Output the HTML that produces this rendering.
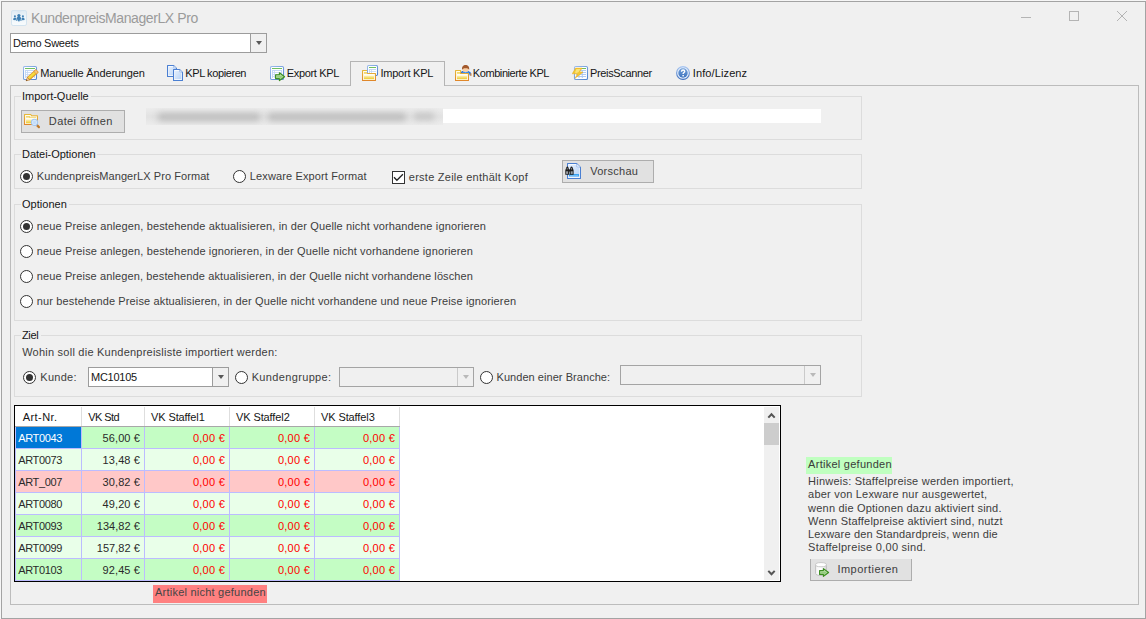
<!DOCTYPE html>
<html><head><meta charset="utf-8"><title>KundenpreisManagerLX Pro</title>
<style>
html,body{margin:0;padding:0;}
body{width:1146px;height:619px;overflow:hidden;background:#f0f0f0;position:relative;font-family:"Liberation Sans",sans-serif;font-size:11px;}
.a{position:absolute;box-sizing:border-box;}
.t{position:absolute;white-space:pre;font-family:"Liberation Sans",sans-serif;}
.win{left:1px;top:1px;width:1145px;height:618px;border:1px solid #a3a3a3;background:#f0f0f0;}
.edge{left:0;top:0;width:1146px;height:619px;background:#f6f6f6;}
.combo{background:#fff;border:1px solid #9c9c9c;}
.combo.dis{background:#f0f0f0;border-color:#a4a4a4;}
.combo .sep{position:absolute;top:0;bottom:0;right:0;border-left:1px solid #9c9c9c;background:#f0f0f0;}
.combo.dis .sep{border-left-color:#cacaca;}
.arrow{position:absolute;width:0;height:0;border-left:3.5px solid transparent;border-right:3.5px solid transparent;border-top:4px solid #585858;}
.dis .arrow{border-top-color:#b9b9b9;}
.panel{left:10px;top:85px;width:1129px;height:520px;border:1px solid #bcbcbc;}
.tabsel{left:350px;top:61px;width:95px;height:25px;border:1px solid #b4b4b4;border-bottom:none;background:#f0f0f0;}
.grp{border:1px solid #dcdcdc;}
.gl{background:#f0f0f0;height:3px;}
.btn{background:#e1e1e1;border:1px solid #adadad;}
.radio{width:13px;height:13px;border:1px solid #333;border-radius:50%;background:#fff;}
.radio.on::after{content:"";position:absolute;left:2px;top:2px;width:7px;height:7px;border-radius:50%;background:#333;}
.chk{width:13px;height:13px;border:1px solid #333;background:#fff;}
.grid{left:14px;top:405px;width:767px;height:177px;border:1px solid #000;background:#fff;overflow:hidden;}
.cell{position:absolute;box-sizing:border-box;}
.sb{position:absolute;left:749px;top:1px;width:15px;height:173px;background:#f0f0f0;}
.thumb{position:absolute;left:0;top:16px;width:15px;height:22px;background:#cdcdcd;}

</style></head>
<body>
<svg width="0" height="0" style="position:absolute"><defs>
<linearGradient id="gFold" x1="0" y1="0" x2="0" y2="1"><stop offset="0" stop-color="#fdf3c0"/><stop offset="1" stop-color="#edc92b"/></linearGradient>
<linearGradient id="gFoldB" x1="0" y1="0" x2="0" y2="1"><stop offset="0" stop-color="#e6b83a"/><stop offset="1" stop-color="#e0872a"/></linearGradient>
<linearGradient id="gDoc" x1="0" y1="0" x2="1" y2="1"><stop offset="0" stop-color="#e4effd"/><stop offset="1" stop-color="#b9d4f7"/></linearGradient>
<linearGradient id="gTabB" x1="0" y1="0" x2="1" y2="1"><stop offset="0" stop-color="#9dbdec"/><stop offset="1" stop-color="#4f83cf"/></linearGradient>
<linearGradient id="gInfo" x1="0" y1="0" x2="0" y2="1"><stop offset="0" stop-color="#a9c6f1"/><stop offset="1" stop-color="#3d6fbd"/></linearGradient>
<linearGradient id="gInfo2" x1="0" y1="0" x2="0" y2="1"><stop offset="0" stop-color="#6f9ed8"/><stop offset="1" stop-color="#3f74bf"/></linearGradient>
<linearGradient id="gArr" x1="0" y1="0" x2="0" y2="1"><stop offset="0" stop-color="#b7dfa6"/><stop offset="1" stop-color="#6db550"/></linearGradient>
<linearGradient id="gPen" x1="0" y1="0" x2="0" y2="1"><stop offset="0" stop-color="#e79a25"/><stop offset="0.3" stop-color="#f7e24a"/><stop offset="0.7" stop-color="#f2d22e"/><stop offset="1" stop-color="#d98a1e"/></linearGradient>
<linearGradient id="gCyl" x1="0" y1="0" x2="1" y2="0"><stop offset="0" stop-color="#f4f4f4"/><stop offset="0.5" stop-color="#ffffff"/><stop offset="1" stop-color="#d8d8d8"/></linearGradient>
<linearGradient id="gTitle" x1="0" y1="0" x2="0" y2="1"><stop offset="0" stop-color="#dfebf4"/><stop offset="0.45" stop-color="#eef5fa"/><stop offset="1" stop-color="#f8fbfd"/></linearGradient>
</defs></svg>
<div class="a edge"></div>
<div class="a win"></div>
<svg class="a" style="left:11px;top:10px;" width="16" height="16" viewBox="0 0 16 16"><rect x="0.5" y="0.5" width="15" height="15" rx="1.6" fill="url(#gTitle)" stroke="#d3e3ef" stroke-width="1"/><path d="M5 0.8L8 3.6L11 0.8" fill="#dbe8f2" stroke="none" opacity="0.9"/><g fill="#3f80b5"><circle cx="7.9" cy="5.6" r="1.6"/><path d="M5.3 11.1C5.2 8 6.3 6.6 7.9 6.6C9.5 6.6 10.6 8 10.5 11.1L9.5 10.9L9.3 9L8.4 11.6H7.4L6.5 9L6.3 10.9Z"/><circle cx="3.9" cy="6.3" r="1.05"/><path d="M2.2 10C2.2 8 3 7.4 3.9 7.4C4.6 7.4 5 7.7 5.2 8.2L4.6 10.2Z"/><circle cx="11.9" cy="6.3" r="1.05"/><path d="M13.6 10C13.6 8 12.8 7.4 11.9 7.4C11.2 7.4 10.8 7.7 10.6 8.2L11.2 10.2Z"/></g></svg>
<svg class="a" style="left:1015px;top:5px" width="120" height="24" viewBox="0 0 120 24"><g stroke="#b4b4b4" stroke-width="1" fill="none"><path d="M6 12.5H16"/><rect x="54.5" y="6.5" width="9" height="9"/><path d="M102 6L112 16M112 6L102 16"/></g></svg>
<div class="a combo" style="left:10px;top:33px;width:257px;height:20px"><div class="sep" style="left:239px"><div class="arrow" style="left:4.5px;top:7px"></div></div></div>
<div class="a panel"></div>
<div class="a tabsel"></div>
<svg class="a" style="left:23px;top:65px;" width="18" height="17" viewBox="0 0 18 17"><g transform="translate(0,1)"><rect x="0.5" y="0.5" width="13" height="13" rx="1.3" fill="#fff" stroke="url(#gTabB)" stroke-width="1.1"/><rect x="2" y="2" width="10" height="1" fill="#6fbf62"/><rect x="2" y="4" width="10" height="8" fill="#c3d7f5"/><rect x="3" y="5" width="1.2" height="1.2" fill="#fff"/><rect x="5" y="5" width="6" height="1.2" fill="#fff"/><rect x="3" y="7" width="1.2" height="1.2" fill="#fff"/><rect x="5" y="7" width="6" height="1.2" fill="#fff"/><rect x="3" y="9" width="1.2" height="1.2" fill="#fff"/><rect x="5" y="9" width="6" height="1.2" fill="#fff"/><rect x="3" y="11" width="1.2" height="1" fill="#fff"/><rect x="5" y="11" width="6" height="1" fill="#fff"/></g><g transform="translate(4.3,14.7) rotate(-42)"><rect x="1.6" y="-1.9" width="11.6" height="3.8" rx="0.8" fill="url(#gPen)" stroke="#d8891f" stroke-width="0.5"/><rect x="10.4" y="-1.9" width="2.8" height="3.8" rx="0.9" fill="#f6c27a" stroke="#d8891f" stroke-width="0.5"/><path d="M1.7 -1.9L-1.6 0L1.7 1.9Z" fill="#f0c792" stroke="#b86f1a" stroke-width="0.5"/><path d="M-0.4 -0.7L-1.7 0L-0.4 0.7Z" fill="#4a2a08"/></g></svg>
<svg class="a" style="left:167px;top:65px;" width="17" height="17" viewBox="0 0 17 17"><g transform="translate(0,0)"><path d="M0.55 0.55H6.7L9.45 3.3V11.45H0.55Z" fill="#fff" stroke="#4a7fd2" stroke-width="1.1" stroke-linejoin="round"/><path d="M1.7 1.7H6.4V3.6H8.3V10.3H1.7Z" fill="url(#gDoc)"/><path d="M6.7 0.8V3.1H9.2" fill="#eaf2fd" stroke="#7ea6e4" stroke-width="0.6"/></g><g transform="translate(6,4)"><path d="M0.55 0.55H6.7L9.45 3.3V11.45H0.55Z" fill="#fff" stroke="#4a7fd2" stroke-width="1.1" stroke-linejoin="round"/><path d="M1.7 1.7H6.4V3.6H8.3V10.3H1.7Z" fill="url(#gDoc)"/><path d="M6.7 0.8V3.1H9.2" fill="#eaf2fd" stroke="#7ea6e4" stroke-width="0.6"/></g></svg>
<svg class="a" style="left:270px;top:65px;" width="17" height="17" viewBox="0 0 17 17"><g transform="translate(0,1)"><rect x="0.5" y="0.5" width="13" height="13" rx="1.3" fill="#fff" stroke="url(#gTabB)" stroke-width="1.1"/><rect x="2" y="2" width="10" height="1" fill="#6fbf62"/><rect x="2" y="4" width="10" height="8" fill="#c3d7f5"/><rect x="3" y="5" width="1.2" height="1.2" fill="#fff"/><rect x="5" y="5" width="6" height="1.2" fill="#fff"/><rect x="3" y="7" width="1.2" height="1.2" fill="#fff"/><rect x="5" y="7" width="6" height="1.2" fill="#fff"/><rect x="3" y="9" width="1.2" height="1.2" fill="#fff"/><rect x="5" y="9" width="6" height="1.2" fill="#fff"/><rect x="3" y="11" width="1.2" height="1" fill="#fff"/><rect x="5" y="11" width="6" height="1" fill="#fff"/></g><g transform="translate(5,7.2)"><path d="M0.6 2.6H4.4V0.6L9.6 4.5L4.4 8.4V6.4H0.6Z" fill="url(#gArr)" stroke="#3a8d1f" stroke-width="1.1" stroke-linejoin="round"/><path d="M1.6 3.6H5.2V2.6L7.8 4.5L5.2 6.4V5.4H1.6Z" fill="none" stroke="#cfeac4" stroke-width="0.5" opacity="0.8"/></g></svg>
<svg class="a" style="left:362px;top:65px;" width="17" height="17" viewBox="0 0 17 17"><g transform="translate(0,5)"><path d="M0.55 0.55H5.6V3.5H13.45V10.45H0.55Z" fill="#fffdf0" stroke="url(#gFoldB)" stroke-width="1.1" stroke-linejoin="round"/><rect x="2" y="2" width="3" height="1.8" fill="#f3d76a"/><rect x="2" y="4.6" width="10" height="1" fill="#ffffff"/><rect x="2" y="5.6" width="10" height="3.6" fill="url(#gFold)"/></g><clipPath id="cpImp"><rect x="5" y="0" width="12" height="8"/></clipPath><g clip-path="url(#cpImp)"><g transform="translate(5,0)"><rect x="0.5" y="0.5" width="10" height="10" rx="1.2" fill="#fff" stroke="url(#gTabB)" stroke-width="1.1"/><rect x="2" y="2" width="7" height="1" fill="#6fbf62"/><rect x="2" y="4" width="7" height="5.5" fill="#c3d7f5"/><rect x="3" y="5" width="1.2" height="1.2" fill="#fff"/><rect x="5" y="5" width="4" height="1.2" fill="#fff"/><rect x="3" y="7" width="1.2" height="1.2" fill="#fff"/><rect x="5" y="7" width="4" height="1.2" fill="#fff"/></g></g><rect x="14" y="8" width="2" height="2.6" fill="#fff"/><path d="M15.5 8V9.6C15.5 10.2 15.1 10.5 14.5 10.5H13.9" fill="none" stroke="#4f83cf" stroke-width="1.1"/></svg>
<svg class="a" style="left:455px;top:65px;" width="17" height="17" viewBox="0 0 17 17"><path d="M4.6 10.5V8.6C5 6.8 6.6 6.2 8 6.2H13C15 6.2 16.2 7.2 16.2 8.8V10.6H14.8V8.8L13.8 10.6H7Z" fill="#3c8eea"/><path d="M8.6 6.2L10.6 7.5L12.6 6.2Z" fill="#9fd0fb"/><path d="M13.2 6.3L15.3 8.4V10.4" fill="none" stroke="#2c64c6" stroke-width="0.9"/><path d="M8 6.3L5.2 8.6" fill="none" stroke="#2c64c6" stroke-width="0.9"/><rect x="15.4" y="8.3" width="1.1" height="2.6" fill="#f0933a"/><ellipse cx="10.6" cy="4.6" rx="3" ry="2.5" fill="#f9d0a6"/><path d="M7.1 4.9C6.5 1.6 8.4 -0.1 10.6 -0.1C12.8 -0.1 14.7 1.6 14.1 4.9C13.8 3.8 12.8 3.3 10.6 3.3C8.4 3.3 7.4 3.8 7.1 4.9Z" fill="#a3592c"/><g transform="translate(0,5)"><path d="M0.55 0.55H5.6V3.5H13.45V10.45H0.55Z" fill="#fffdf0" stroke="url(#gFoldB)" stroke-width="1.1" stroke-linejoin="round"/><rect x="2" y="2" width="3" height="1.8" fill="#f3d76a"/><rect x="2" y="4.6" width="10" height="1" fill="#ffffff"/><rect x="2" y="5.6" width="10" height="3.6" fill="url(#gFold)"/></g></svg>
<svg class="a" style="left:572px;top:65px;" width="17" height="17" viewBox="0 0 17 17"><g transform="translate(2,1)"><rect x="0.5" y="0.5" width="13" height="13" rx="1.3" fill="#fff" stroke="url(#gTabB)" stroke-width="1.1"/><rect x="2" y="2" width="10" height="1" fill="#6fbf62"/><g stroke="#a9c5ef" stroke-width="0.9"><path d="M2 4.5H12M2 6.5H12M2 8.5H12M2 10.5H12M5 4V12M8.3 4V12"/></g></g><path d="M3.6 3.1H10.2L7.6 6.8L11 7.2L3 13.3L5.6 8.8L0.2 8.8Z" fill="#f3c832" stroke="#e8a820" stroke-width="0.5" stroke-linejoin="round"/><path d="M4.4 4H8.6L6.4 7.2L4.4 8L3 7.8Z" fill="#fbe682" opacity="0.9"/></svg>
<svg class="a" style="left:676px;top:66px;" width="15" height="15" viewBox="0 0 15 15"><circle cx="7" cy="7" r="6.4" fill="#e3edfb" stroke="url(#gInfo)" stroke-width="1.1"/><circle cx="7" cy="7" r="4.7" fill="url(#gInfo2)"/><path d="M5.5 5.7C5.5 4.5 6.2 4 7.1 4C8 4 8.7 4.5 8.7 5.4C8.7 6.5 7.1 6.7 7.1 8.1" fill="none" stroke="#fff" stroke-width="1.4"/><rect x="6.4" y="9" width="1.5" height="1.4" fill="#fff"/></svg>
<div class="a grp" style="left:14px;top:96px;width:848px;height:44px"></div>
<div class="a gl" style="left:21px;top:95px;width:70px"></div>
<div class="a grp" style="left:14px;top:154px;width:848px;height:35px"></div>
<div class="a gl" style="left:21px;top:153px;width:76px"></div>
<div class="a grp" style="left:14px;top:204px;width:848px;height:117px"></div>
<div class="a gl" style="left:21px;top:203px;width:48px"></div>
<div class="a grp" style="left:14px;top:335px;width:848px;height:62px"></div>
<div class="a gl" style="left:21px;top:334px;width:20px"></div>
<div class="a" style="left:146px;top:109px;width:675px;height:14px;background:#fff"></div>
<div class="a" style="left:146px;top:108px;width:297px;height:17px;overflow:hidden;background:linear-gradient(#ececec,#e3e3e3 45%,#e3e3e3 55%,#ececec)"><div class="a" style="left:12px;top:5px;width:102px;height:8px;background:#bdbdbd;filter:blur(3px)"></div><div class="a" style="left:122px;top:5px;width:138px;height:8px;background:#bdbdbd;filter:blur(3px)"></div><div class="a" style="left:268px;top:5px;width:20px;height:7px;background:#c4c4c4;filter:blur(3px)"></div></div>
<div class="a btn" style="left:21px;top:110px;width:104px;height:23px"></div>
<div class="a btn" style="left:562px;top:160px;width:92px;height:23px"></div>
<div class="a btn" style="left:810px;top:558px;width:102px;height:23px"></div><div class="a" style="left:810px;top:558px;width:102px;height:1px;background:#f0f0f0"></div>
<svg class="a" style="left:24px;top:114px;" width="17" height="15" viewBox="0 0 17 15"><path d="M0.55 0.55H6.8L7.6 1.8H13.45V10.45H0.55Z" fill="#fffdf0" stroke="url(#gFoldB)" stroke-width="1.1" stroke-linejoin="round"/><rect x="2" y="2" width="4" height="1.6" fill="#f3d76a"/><rect x="5" y="2.8" width="7" height="0.9" fill="#f1cf62"/><rect x="2" y="5.4" width="10" height="3.9" fill="url(#gFold)"/><path d="M12.7 10.9L14.9 13.1" stroke="#bf7a2c" stroke-width="2.2" stroke-linecap="round"/><circle cx="10.5" cy="8.4" r="3.1" fill="#d5e7fb" stroke="#a3c8f2" stroke-width="1.1"/><rect x="9.2" y="7.2" width="2.6" height="2.6" fill="#c0dbf8" opacity="0.9"/></svg>
<svg class="a" style="left:565px;top:163px;" width="17" height="17" viewBox="0 0 17 17"><g transform="translate(2,0)"><path d="M0.55 0.55H9.7L13.45 4.3V15.45H0.55Z" fill="#fff" stroke="#4a7fd2" stroke-width="1.1" stroke-linejoin="round"/><path d="M1.7 1.7H9.4V4.6H12.3V14.3H1.7Z" fill="url(#gDoc)"/><path d="M9.7 0.8V4.1H13.2" fill="#eaf2fd" stroke="#7ea6e4" stroke-width="0.6"/></g><rect x="4" y="11" width="10" height="2.4" fill="#3aa2f2"/><rect x="5" y="12" width="8" height="0.6" fill="#8fd0ff"/><g fill="#1e1e1e"><path d="M0.3 11.7V7.2L1.4 4.2C1.6 3.4 3.2 3.4 3.4 4.2L4.2 7.2V11.7Z"/><path d="M4.7 11.7V7.2L5.5 4.2C5.7 3.4 7.3 3.4 7.5 4.2L8.6 7.2V11.7Z"/><rect x="3.6" y="6.4" width="1.8" height="2.2"/></g><rect x="1.1" y="8.3" width="2" height="2.6" fill="#9aa0a6"/><rect x="5.7" y="8.3" width="2" height="2.6" fill="#9aa0a6"/><rect x="1.7" y="5" width="0.9" height="1.6" fill="#8b9096"/><rect x="6.1" y="5" width="0.9" height="1.6" fill="#8b9096"/></svg>
<svg class="a" style="left:815px;top:562px;" width="15" height="16" viewBox="0 0 15 16"><path d="M0.6 2.6V11.4C0.6 12.9 3 13.5 6 13.5C9 13.5 11.4 12.9 11.4 11.4V2.6" fill="url(#gCyl)" stroke="#c0c0c0" stroke-width="1"/><ellipse cx="6" cy="2.7" rx="5.4" ry="2.1" fill="#ffffff" stroke="#c4c4c4" stroke-width="0.9"/><g transform="translate(4,6)"><path d="M0.6 2.6H4.4V0.6L9.6 4.5L4.4 8.4V6.4H0.6Z" fill="url(#gArr)" stroke="#3a8d1f" stroke-width="1.1" stroke-linejoin="round"/><path d="M1.6 3.6H5.2V2.6L7.8 4.5L5.2 6.4V5.4H1.6Z" fill="none" stroke="#cfeac4" stroke-width="0.5" opacity="0.8"/></g></svg>
<div class="a radio on" style="left:20px;top:170px"></div>
<div class="a radio" style="left:233px;top:170px"></div>
<div class="a radio on" style="left:20px;top:220px"></div>
<div class="a radio" style="left:20px;top:245px"></div>
<div class="a radio" style="left:20px;top:270px"></div>
<div class="a radio" style="left:20px;top:295px"></div>
<div class="a radio on" style="left:23px;top:371px"></div>
<div class="a radio" style="left:235px;top:371px"></div>
<div class="a radio" style="left:480px;top:371px"></div>
<div class="a chk" style="left:392px;top:171px"><svg width="11" height="11" viewBox="0 0 11 11" style="position:absolute;left:0;top:0"><path d="M1 5.3L3.9 8.3L9.9 2.3" stroke="#222" stroke-width="1.3" fill="none"/></svg></div>
<div class="a combo" style="left:88px;top:367px;width:141px;height:20px"><div class="sep" style="left:123px"><div class="arrow" style="left:4.5px;top:7px"></div></div></div>
<div class="a combo dis" style="left:339px;top:367px;width:135px;height:20px"><div class="sep" style="left:117px"><div class="arrow" style="left:4.5px;top:7px"></div></div></div>
<div class="a combo dis" style="left:620px;top:365px;width:201px;height:20px"><div class="sep" style="left:183px"><div class="arrow" style="left:4.5px;top:7px"></div></div></div>
<div class="a grid"><div class="cell" style="left:66px;top:1px;width:1px;height:19px;background:#dedede"></div><div class="cell" style="left:129px;top:1px;width:1px;height:19px;background:#dedede"></div><div class="cell" style="left:214px;top:1px;width:1px;height:19px;background:#dedede"></div><div class="cell" style="left:299px;top:1px;width:1px;height:19px;background:#dedede"></div><div class="cell" style="left:384px;top:1px;width:1px;height:19px;background:#dedede"></div><div class="cell" style="left:0px;top:20px;width:385px;height:1px;background:#a8a8a8"></div><div class="cell" style="left:0px;top:21px;width:385px;height:21px;background:#c4fdc4"></div><div class="cell" style="left:0px;top:42px;width:385px;height:1px;background:#bcbcff"></div><div class="cell" style="left:0px;top:43px;width:385px;height:21px;background:#e9ffe9"></div><div class="cell" style="left:0px;top:64px;width:385px;height:1px;background:#bcbcff"></div><div class="cell" style="left:0px;top:65px;width:385px;height:21px;background:#ffc8c8"></div><div class="cell" style="left:0px;top:86px;width:385px;height:1px;background:#bcbcff"></div><div class="cell" style="left:0px;top:87px;width:385px;height:21px;background:#e9ffe9"></div><div class="cell" style="left:0px;top:108px;width:385px;height:1px;background:#bcbcff"></div><div class="cell" style="left:0px;top:109px;width:385px;height:21px;background:#c4fdc4"></div><div class="cell" style="left:0px;top:130px;width:385px;height:1px;background:#bcbcff"></div><div class="cell" style="left:0px;top:131px;width:385px;height:21px;background:#e9ffe9"></div><div class="cell" style="left:0px;top:152px;width:385px;height:1px;background:#bcbcff"></div><div class="cell" style="left:0px;top:153px;width:385px;height:21px;background:#c4fdc4"></div><div class="cell" style="left:0px;top:174px;width:385px;height:1px;background:#bcbcff"></div><div class="cell" style="left:1px;top:21px;width:65px;height:21px;background:#0078d7"></div><div class="cell" style="left:0px;top:21px;width:1px;height:154px;background:#bcbcff"></div><div class="cell" style="left:66px;top:21px;width:1px;height:154px;background:#bcbcff"></div><div class="cell" style="left:129px;top:21px;width:1px;height:154px;background:#bcbcff"></div><div class="cell" style="left:214px;top:21px;width:1px;height:154px;background:#bcbcff"></div><div class="cell" style="left:299px;top:21px;width:1px;height:154px;background:#bcbcff"></div><div class="cell" style="left:384px;top:21px;width:1px;height:154px;background:#bcbcff"></div><div class="sb"><div class="thumb"></div><svg style="position:absolute;left:0;top:0" width="15" height="173" viewBox="0 0 15 173"><g stroke="#555" stroke-width="2" fill="none"><path d="M4.3 10.6L7.5 7.2L10.7 10.6"/><path d="M4.3 163.9L7.5 167.3L10.7 163.9"/></g></svg></div></div>
<div class="a" style="left:153px;top:585px;width:114px;height:18px;background:#ff8080"></div>
<div class="a" style="left:806px;top:457px;width:86px;height:17px;background:#c0ffc0"></div>
<div class="t" style="top:10.3px;font-size:14px;line-height:17px;color:#9b9b9b;letter-spacing:-0.412px;left:31.0px;">KundenpreisManagerLX Pro</div>
<div class="t" style="top:36.0px;font-size:11px;line-height:14px;color:#151515;letter-spacing:-0.258px;left:13.0px;">Demo Sweets</div>
<div class="t" style="top:66.0px;font-size:11px;line-height:14px;color:#151515;letter-spacing:-0.169px;left:40.2px;">Manuelle Änderungen</div>
<div class="t" style="top:66.0px;font-size:11px;line-height:14px;color:#151515;letter-spacing:-0.404px;left:185.3px;">KPL kopieren</div>
<div class="t" style="top:66.0px;font-size:11px;line-height:14px;color:#151515;letter-spacing:-0.338px;left:286.8px;">Export KPL</div>
<div class="t" style="top:66.0px;font-size:11px;line-height:14px;color:#151515;letter-spacing:-0.226px;left:380.4px;">Import KPL</div>
<div class="t" style="top:66.0px;font-size:11px;line-height:14px;color:#151515;letter-spacing:-0.418px;left:472.8px;">Kombinierte KPL</div>
<div class="t" style="top:66.0px;font-size:11px;line-height:14px;color:#151515;letter-spacing:-0.359px;left:590.0px;">PreisScanner</div>
<div class="t" style="top:66.0px;font-size:11px;line-height:14px;color:#151515;letter-spacing:0.110px;left:692.8px;">Info/Lizenz</div>
<div class="t" style="top:89.0px;font-size:11px;line-height:14px;color:#151515;letter-spacing:0.005px;left:22.0px;">Import-Quelle</div>
<div class="t" style="top:147.0px;font-size:11px;line-height:14px;color:#151515;letter-spacing:-0.023px;left:22.0px;">Datei-Optionen</div>
<div class="t" style="top:197.0px;font-size:11px;line-height:14px;color:#151515;letter-spacing:0.035px;left:22.0px;">Optionen</div>
<div class="t" style="top:328.0px;font-size:11px;line-height:14px;color:#151515;letter-spacing:-0.345px;left:22.0px;">Ziel</div>
<div class="t" style="top:114.0px;font-size:11px;line-height:14px;color:#3d3d3d;letter-spacing:0.398px;left:48.8px;">Datei öffnen</div>
<div class="t" style="top:164.0px;font-size:11px;line-height:14px;color:#3d3d3d;letter-spacing:0.275px;left:590.2px;">Vorschau</div>
<div class="t" style="top:562.0px;font-size:11px;line-height:14px;color:#3d3d3d;letter-spacing:0.486px;left:837.4px;">Importieren</div>
<div class="t" style="top:169.0px;font-size:11px;line-height:14px;color:#3d3d3d;letter-spacing:0.069px;left:36.8px;">KundenpreisMangerLX Pro Format</div>
<div class="t" style="top:169.0px;font-size:11px;line-height:14px;color:#3d3d3d;letter-spacing:0.124px;left:249.8px;">Lexware Export Format</div>
<div class="t" style="top:170.0px;font-size:11px;line-height:14px;color:#3d3d3d;letter-spacing:0.251px;left:408.8px;">erste Zeile enthält Kopf</div>
<div class="t" style="top:219.0px;font-size:11px;line-height:14px;color:#3d3d3d;letter-spacing:0.137px;left:36.8px;">neue Preise anlegen, bestehende aktualisieren, in der Quelle nicht vorhandene ignorieren</div>
<div class="t" style="top:244.0px;font-size:11px;line-height:14px;color:#3d3d3d;letter-spacing:0.140px;left:36.8px;">neue Preise anlegen, bestehende ignorieren, in der Quelle nicht vorhandene ignorieren</div>
<div class="t" style="top:269.0px;font-size:11px;line-height:14px;color:#3d3d3d;letter-spacing:0.118px;left:36.8px;">neue Preise anlegen, bestehende aktualisieren, in der Quelle nicht vorhandene löschen</div>
<div class="t" style="top:294.0px;font-size:11px;line-height:14px;color:#3d3d3d;letter-spacing:0.136px;left:36.8px;">nur bestehende Preise aktualisieren, in der Quelle nicht vorhandene und neue Preise ignorieren</div>
<div class="t" style="top:345.0px;font-size:11px;line-height:14px;color:#3d3d3d;letter-spacing:0.233px;left:22.2px;">Wohin soll die Kundenpreisliste importiert werden:</div>
<div class="t" style="top:370.0px;font-size:11px;line-height:14px;color:#3d3d3d;letter-spacing:0.265px;left:40.3px;">Kunde:</div>
<div class="t" style="top:370.0px;font-size:11px;line-height:14px;color:#151515;letter-spacing:-0.251px;left:91.0px;">MC10105</div>
<div class="t" style="top:370.0px;font-size:11px;line-height:14px;color:#3d3d3d;letter-spacing:0.347px;left:251.7px;">Kundengruppe:</div>
<div class="t" style="top:370.0px;font-size:11px;line-height:14px;color:#3d3d3d;letter-spacing:0.053px;left:496.5px;">Kunden einer Branche:</div>
<div class="t" style="top:410.0px;font-size:11px;line-height:14px;color:#151515;letter-spacing:0.403px;left:22.8px;">Art-Nr.</div>
<div class="t" style="top:410.0px;font-size:11px;line-height:14px;color:#151515;letter-spacing:-0.550px;left:88.2px;">VK Std</div>
<div class="t" style="top:410.0px;font-size:11px;line-height:14px;color:#151515;letter-spacing:-0.104px;left:151.0px;">VK Staffel1</div>
<div class="t" style="top:410.0px;font-size:11px;line-height:14px;color:#151515;letter-spacing:-0.104px;left:236.0px;">VK Staffel2</div>
<div class="t" style="top:410.0px;font-size:11px;line-height:14px;color:#151515;letter-spacing:-0.104px;left:321.0px;">VK Staffel3</div>
<div class="t" style="top:431.0px;font-size:11px;line-height:14px;color:#ffffff;letter-spacing:-0.347px;left:18.2px;">ART0043</div>
<div class="t" style="top:431.0px;font-size:11px;line-height:14px;color:#2a2a2a;letter-spacing:0.083px;right:1006.1px;">56,00 €</div>
<div class="t" style="top:431.0px;font-size:11px;line-height:14px;color:#ff0000;letter-spacing:0.241px;right:921.0px;">0,00 €</div>
<div class="t" style="top:431.0px;font-size:11px;line-height:14px;color:#ff0000;letter-spacing:0.241px;right:836.0px;">0,00 €</div>
<div class="t" style="top:431.0px;font-size:11px;line-height:14px;color:#ff0000;letter-spacing:0.241px;right:751.0px;">0,00 €</div>
<div class="t" style="top:453.0px;font-size:11px;line-height:14px;color:#2a2a2a;letter-spacing:-0.347px;left:18.2px;">ART0073</div>
<div class="t" style="top:453.0px;font-size:11px;line-height:14px;color:#2a2a2a;letter-spacing:0.083px;right:1006.1px;">13,48 €</div>
<div class="t" style="top:453.0px;font-size:11px;line-height:14px;color:#ff0000;letter-spacing:0.241px;right:921.0px;">0,00 €</div>
<div class="t" style="top:453.0px;font-size:11px;line-height:14px;color:#ff0000;letter-spacing:0.241px;right:836.0px;">0,00 €</div>
<div class="t" style="top:453.0px;font-size:11px;line-height:14px;color:#ff0000;letter-spacing:0.241px;right:751.0px;">0,00 €</div>
<div class="t" style="top:475.0px;font-size:11px;line-height:14px;color:#2a2a2a;letter-spacing:-0.347px;left:18.2px;">ART_007</div>
<div class="t" style="top:475.0px;font-size:11px;line-height:14px;color:#2a2a2a;letter-spacing:0.083px;right:1006.1px;">30,82 €</div>
<div class="t" style="top:475.0px;font-size:11px;line-height:14px;color:#ff0000;letter-spacing:0.241px;right:921.0px;">0,00 €</div>
<div class="t" style="top:475.0px;font-size:11px;line-height:14px;color:#ff0000;letter-spacing:0.241px;right:836.0px;">0,00 €</div>
<div class="t" style="top:475.0px;font-size:11px;line-height:14px;color:#ff0000;letter-spacing:0.241px;right:751.0px;">0,00 €</div>
<div class="t" style="top:497.0px;font-size:11px;line-height:14px;color:#2a2a2a;letter-spacing:-0.347px;left:18.2px;">ART0080</div>
<div class="t" style="top:497.0px;font-size:11px;line-height:14px;color:#2a2a2a;letter-spacing:0.083px;right:1006.1px;">49,20 €</div>
<div class="t" style="top:497.0px;font-size:11px;line-height:14px;color:#ff0000;letter-spacing:0.241px;right:921.0px;">0,00 €</div>
<div class="t" style="top:497.0px;font-size:11px;line-height:14px;color:#ff0000;letter-spacing:0.241px;right:836.0px;">0,00 €</div>
<div class="t" style="top:497.0px;font-size:11px;line-height:14px;color:#ff0000;letter-spacing:0.241px;right:751.0px;">0,00 €</div>
<div class="t" style="top:519.0px;font-size:11px;line-height:14px;color:#2a2a2a;letter-spacing:-0.347px;left:18.2px;">ART0093</div>
<div class="t" style="top:519.0px;font-size:11px;line-height:14px;color:#2a2a2a;letter-spacing:0.025px;right:1006.2px;">134,82 €</div>
<div class="t" style="top:519.0px;font-size:11px;line-height:14px;color:#ff0000;letter-spacing:0.241px;right:921.0px;">0,00 €</div>
<div class="t" style="top:519.0px;font-size:11px;line-height:14px;color:#ff0000;letter-spacing:0.241px;right:836.0px;">0,00 €</div>
<div class="t" style="top:519.0px;font-size:11px;line-height:14px;color:#ff0000;letter-spacing:0.241px;right:751.0px;">0,00 €</div>
<div class="t" style="top:541.0px;font-size:11px;line-height:14px;color:#2a2a2a;letter-spacing:-0.347px;left:18.2px;">ART0099</div>
<div class="t" style="top:541.0px;font-size:11px;line-height:14px;color:#2a2a2a;letter-spacing:0.025px;right:1006.2px;">157,82 €</div>
<div class="t" style="top:541.0px;font-size:11px;line-height:14px;color:#ff0000;letter-spacing:0.241px;right:921.0px;">0,00 €</div>
<div class="t" style="top:541.0px;font-size:11px;line-height:14px;color:#ff0000;letter-spacing:0.241px;right:836.0px;">0,00 €</div>
<div class="t" style="top:541.0px;font-size:11px;line-height:14px;color:#ff0000;letter-spacing:0.241px;right:751.0px;">0,00 €</div>
<div class="t" style="top:563.0px;font-size:11px;line-height:14px;color:#2a2a2a;letter-spacing:-0.347px;left:18.2px;">ART0103</div>
<div class="t" style="top:563.0px;font-size:11px;line-height:14px;color:#2a2a2a;letter-spacing:0.083px;right:1006.1px;">92,45 €</div>
<div class="t" style="top:563.0px;font-size:11px;line-height:14px;color:#ff0000;letter-spacing:0.241px;right:921.0px;">0,00 €</div>
<div class="t" style="top:563.0px;font-size:11px;line-height:14px;color:#ff0000;letter-spacing:0.241px;right:836.0px;">0,00 €</div>
<div class="t" style="top:563.0px;font-size:11px;line-height:14px;color:#ff0000;letter-spacing:0.241px;right:751.0px;">0,00 €</div>
<div class="t" style="top:585.0px;font-size:11px;line-height:14px;color:#454545;letter-spacing:0.229px;left:155.0px;">Artikel nicht gefunden</div>
<div class="t" style="top:457.0px;font-size:11px;line-height:14px;color:#3a3a3a;letter-spacing:0.267px;left:808.1px;">Artikel gefunden</div>
<div class="t" style="top:474.0px;font-size:11px;line-height:14px;color:#3d3d3d;letter-spacing:0.218px;left:808.1px;">Hinweis: Staffelpreise werden importiert,</div>
<div class="t" style="top:487.0px;font-size:11px;line-height:14px;color:#3d3d3d;letter-spacing:0.202px;left:808.1px;">aber von Lexware nur ausgewertet,</div>
<div class="t" style="top:500.5px;font-size:11px;line-height:14px;color:#3d3d3d;letter-spacing:0.203px;left:808.1px;">wenn die Optionen dazu aktiviert sind.</div>
<div class="t" style="top:513.5px;font-size:11px;line-height:14px;color:#3d3d3d;letter-spacing:0.200px;left:808.1px;">Wenn Staffelpreise aktiviert sind, nutzt</div>
<div class="t" style="top:527.0px;font-size:11px;line-height:14px;color:#3d3d3d;letter-spacing:0.144px;left:808.1px;">Lexware den Standardpreis, wenn die</div>
<div class="t" style="top:540.0px;font-size:11px;line-height:14px;color:#3d3d3d;letter-spacing:0.265px;left:808.1px;">Staffelpreise 0,00 sind.</div>
</body></html>
